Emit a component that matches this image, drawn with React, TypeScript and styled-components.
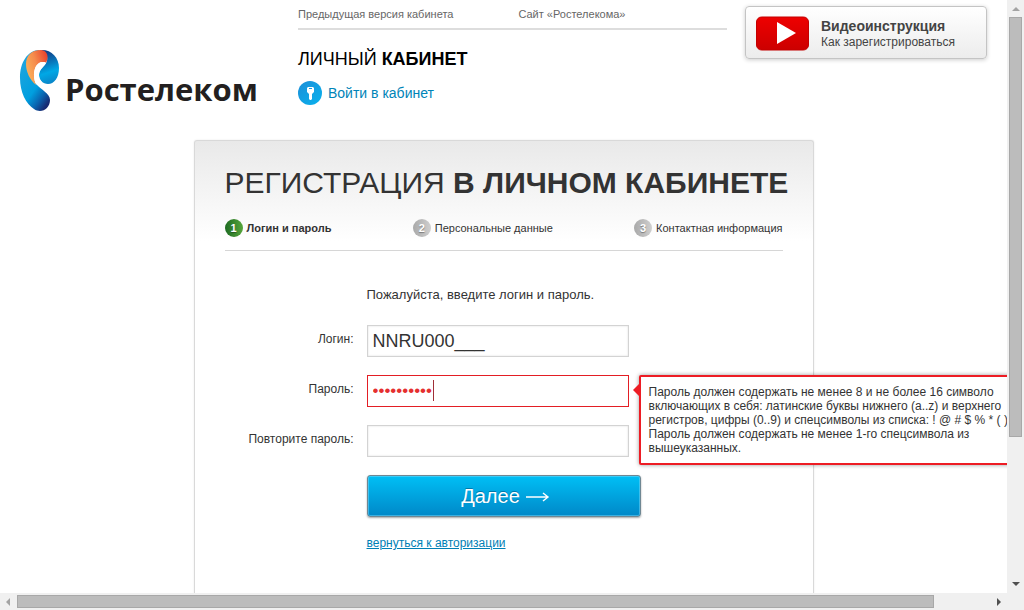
import React from "react";
import styled, { createGlobalStyle } from "styled-components";

const GlobalStyle = createGlobalStyle`
  * { box-sizing: border-box; }
  body {
    margin: 0;
    background: #fff;
    color: #333;
    font: 12px/14px "Liberation Sans", Arial, sans-serif;
  }
  h1, h2, p, ol { margin: 0; padding: 0; }
`;

const Window = styled.div`
  display: grid;
  grid-template-columns: minmax(0, 1fr) 17px;
  grid-template-rows: minmax(0, 1fr) 17px;
  height: 100vh;
  overflow: hidden;
`;

const Page = styled.div`
  overflow: hidden;
  display: flex;
  flex-direction: column;
`;

const Header = styled.header`
  display: flex;
  align-items: flex-start;
  flex: none;
  padding: 6px 20px 0 18px;
  height: 140px;
`;

const Logo = styled.a`
  display: flex;
  flex: none;
  width: 280px;
  margin-top: 43px;
  gap: 4px;
  color: #231f20;
  text-decoration: none;
  font: bold 31px/40px "Open Sans", "Noto Sans", sans-serif;
`;

const LogoText = styled.span`
  margin-top: 20px;
`;

const Cabinet = styled.div`
  flex: 0 1 429px;
  margin-right: 18px;
`;

const TopNav = styled.nav`
  display: flex;
  gap: 65px;
  padding: 1px 0 7px;
  border-bottom: 2px solid #ddd;
`;

const TopLink = styled.a`
  color: #666;
  font-size: 11px;
  text-decoration: none;
`;

const CabinetTitle = styled.h2`
  margin-top: 18px;
  color: #000;
  font-size: 18px;
  line-height: 22px;
  font-weight: normal;
  text-transform: uppercase;
`;

const LoginLink = styled.a`
  display: inline-flex;
  align-items: center;
  gap: 6px;
  margin-top: 11px;
  color: #0084b8;
  font-size: 14px;
  line-height: 24px;
  text-decoration: none;
`;

const VideoButton = styled.button`
  display: flex;
  flex: none;
  align-items: center;
  gap: 11px;
  width: 242px;
  height: 53px;
  padding: 2px 10px 0;
  border: 1px solid #c4c4c4;
  border-radius: 4px;
  background: linear-gradient(#fff, #ececec);
  box-shadow: 0 1px 4px rgba(0, 0, 0, 0.2);
  color: #444;
  font: 12px/16px "Liberation Sans", Arial, sans-serif;
  text-align: left;
`;

const VideoTitle = styled.strong`
  display: block;
  font-size: 14px;
`;

const Card = styled.main`
  flex: 1 0 auto;
  width: 620px;
  max-width: 100%;
  margin: 0 auto;
  padding: 23px 30px 0;
  border: 1px solid #d9d9d9;
  border-bottom: 0;
  border-radius: 3px 3px 0 0;
  background: linear-gradient(#e9e9e9, #fff 100px);
  box-shadow: 0 0 2px rgba(0, 0, 0, 0.1);
`;

const Title = styled.h1`
  font-size: 30px;
  line-height: 38px;
  font-weight: normal;
  text-transform: uppercase;
  white-space: nowrap;
`;

const Steps = styled.ol`
  display: flex;
  justify-content: space-between;
  margin-top: 17px;
  padding-bottom: 13px;
  border-bottom: 1px solid #d6d6d6;
  list-style: none;
`;

const Step = styled.li<{ $active?: boolean }>`
  display: flex;
  align-items: center;
  gap: 4px;
  font-size: 11px;
  line-height: 18px;
  font-weight: ${(p) => (p.$active ? "bold" : "normal")};
`;

const StepNumber = styled.span<{ $active?: boolean }>`
  width: 18px;
  height: 18px;
  border-radius: 50%;
  background: ${(p) =>
    p.$active
      ? "linear-gradient(90deg, #1d6b22, #57a63c)"
      : "linear-gradient(90deg, #a9a9a9, #cfcfcf)"};
  color: #fff;
  font-weight: bold;
  text-align: center;
  text-shadow: 0 1px 1px rgba(0, 0, 0, 0.35);
`;

const Form = styled.form`
  display: flex;
  flex-direction: column;
  align-items: flex-start;
  gap: 18px;
  padding-left: 142px;
`;

const Intro = styled.p`
  margin: 37px 0 5px;
  font-size: 13px;
`;

const Row = styled.div`
  display: flex;
  align-items: flex-start;
  gap: 13px;
  margin-left: -142px;
`;

const Label = styled.label`
  width: 129px;
  padding-top: 7px;
  text-align: right;
`;

const Field = styled.div`
  position: relative;
`;

const Input = styled.input<{ $invalid?: boolean }>`
  display: block;
  width: 262px;
  height: 32px;
  padding: 0 5px;
  border: ${(p) => (p.$invalid ? "1px solid #e31e24" : "1px solid #d3d3d3")};
  border-radius: 0;
  background: #fff;
  box-shadow: ${(p) => (p.$invalid ? "none" : "inset 0 0 2px rgba(0, 0, 0, 0.15)")};
  color: ${(p) => (p.$invalid ? "#e52f2f" : "#333")};
  font: 18px "Liberation Sans", Arial, sans-serif;
  outline: none;

  &[type="password"] {
    font-size: 17px;
  }
`;

const Caret = styled.i`
  position: absolute;
  left: 66px;
  top: 5px;
  width: 1px;
  height: 21px;
  background: #a03038;
`;

const Tooltip = styled.div`
  position: absolute;
  left: 272px;
  top: 0;
  width: 400px;
  padding: 8px;
  border: 2px solid #ed1c24;
  border-radius: 2px;
  background: #fff;
  box-shadow: 0 0 4px rgba(0, 0, 0, 0.4);
  white-space: nowrap;

  &::before {
    content: "";
    position: absolute;
    left: -8px;
    top: 7px;
    border: 6px solid transparent;
    border-left: 0;
    border-right-color: #ed1c24;
  }
`;

const Submit = styled.button`
  display: flex;
  align-items: center;
  justify-content: center;
  gap: 6px;
  width: 274px;
  height: 42px;
  padding: 0 0 0 4px;
  border: 1px solid #6f8793;
  border-radius: 3px;
  background: linear-gradient(#00bff5, #0088c8);
  box-shadow: inset 0 0 0 1px rgba(120, 215, 250, 0.5), 0 1px 2px rgba(0, 0, 0, 0.35);
  color: #fff;
  font: 20px "Liberation Sans", Arial, sans-serif;
  text-shadow: 0 -1px 0 rgba(0, 70, 110, 0.5);
`;

const BackLink = styled.a`
  color: #0080b5;
  line-height: 16px;
  text-decoration: underline;
`;

const VerticalBar = styled.div`
  display: flex;
  flex-direction: column;
  align-items: center;
  justify-content: space-between;
  background: #f0f0f0;
  padding: 5px 0 5px;
`;

const VerticalThumb = styled.div`
  flex: 0 0 72%;
  width: 13px;
  margin: 4px 0 auto;
  border: 1px solid #a8a8a8;
  background: #bcbcbc;
`;

const HorizontalBar = styled.div`
  display: flex;
  align-items: center;
  background: #f0f0f0;
  padding: 0 5px 0 5px;
`;

const HorizontalThumb = styled.div`
  flex: 0 0 92%;
  height: 13px;
  margin: 0 auto 0 4px;
  border: 1px solid #a8a8a8;
  background: #bcbcbc;
`;

const Corner = styled.div`
  background: #f0f0f0;
`;

function LogoMark() {
  return (
    <svg width="43" height="64" viewBox="0 0 43 64" aria-hidden="true">
      <defs>
        <linearGradient id="body" x1="0.2" y1="0.2" x2="0.75" y2="1">
          <stop offset="0" stopColor="#1ba4de" />
          <stop offset="0.55" stopColor="#009fdf" />
          <stop offset="0.8" stopColor="#0a62ae" />
          <stop offset="1" stopColor="#162a72" />
        </linearGradient>
        <linearGradient id="head" x1="0.4" y1="0" x2="0.6" y2="1">
          <stop offset="0" stopColor="#123a82" />
          <stop offset="0.4" stopColor="#0879bd" />
          <stop offset="0.65" stopColor="#00a8e6" />
          <stop offset="1" stopColor="#0b83c6" />
        </linearGradient>
        <linearGradient id="flame" x1="0" y1="0.7" x2="1" y2="0.2">
          <stop offset="0" stopColor="#fbb45c" />
          <stop offset="0.5" stopColor="#f58b4c" />
          <stop offset="1" stopColor="#e8432e" />
        </linearGradient>
      </defs>
      <path d="M22 1C9 1 2 14 2 29C2 43 8 55 16 60C23 65 32 60 32 51C32 44 23 41 18 35C13 28 10 8 22 1Z" fill="url(#body)" />
      <path d="M22 1C33 0 41 8 41 19C41 29 36 35 30 35C25 35 21 31 21 26C21 20 27 18 29 12C30 7 28 3 22 1Z" fill="url(#head)" />
      <path d="M23 1C13 1 8 7 8 15C8 23 12 31 18 36C14 26 16 16 23 13L28 14C31 8 30 2 23 1Z" fill="url(#flame)" />
      <path d="M18 35C14 26 16 13 25 13C27 13 28 13 28 14C26 17 21 20 21 26C21 29 22 31 24 33C22 35 20 36 18 35Z" fill="#fff" />
    </svg>
  );
}

function KeyIcon() {
  return (
    <svg width="24" height="24" viewBox="0 0 24 24" aria-hidden="true">
      <defs>
        <linearGradient id="disc" x1="0" y1="0" x2="1" y2="1">
          <stop offset="0" stopColor="#1d8fd8" />
          <stop offset="1" stopColor="#08b2ee" />
        </linearGradient>
      </defs>
      <circle cx="12" cy="12" r="12" fill="url(#disc)" />
      <path fillRule="evenodd" fill="#fff" d="M9 7L10 6H15L16 7V11L14 13V18L13 19H12L11 18V13L9 11ZM11 7V8H14V7Z" />
    </svg>
  );
}

function PlayIcon() {
  return (
    <svg width="54" height="36" viewBox="0 0 54 36" aria-hidden="true">
      <defs>
        <linearGradient id="play" x1="0" y1="0" x2="0" y2="1">
          <stop offset="0" stopColor="#ee0000" />
          <stop offset="1" stopColor="#cc0000" />
        </linearGradient>
      </defs>
      <rect x="0.5" y="1" width="52" height="33" rx="5" fill="url(#play)" stroke="#c40000" strokeWidth="1" />
      <path d="M21 6L40 17L21 28Z" fill="#fff" />
    </svg>
  );
}

function Arrow({ d, color }: { d: string; color: string }) {
  return (
    <svg width="8" height="8" viewBox="0 0 8 8" style={{ flex: "none" }} aria-hidden="true">
      <path d={d} fill={color} />
    </svg>
  );
}

const steps = ["Логин и пароль", "Персональные данные", "Контактная информация"];

export default function App() {
  return (
    <Window>
      <GlobalStyle />
      <Page>
        <Header>
          <Logo href="#">
            <LogoMark />
            <LogoText>Ростелеком</LogoText>
          </Logo>
          <Cabinet>
            <TopNav>
              <TopLink href="#">Предыдущая версия кабинета</TopLink>
              <TopLink href="#">Сайт «Ростелекома»</TopLink>
            </TopNav>
            <CabinetTitle>
              Личный <b>кабинет</b>
            </CabinetTitle>
            <LoginLink href="#">
              <KeyIcon />
              Войти в кабинет
            </LoginLink>
          </Cabinet>
          <VideoButton type="button">
            <PlayIcon />
            <span>
              <VideoTitle>Видеоинструкция</VideoTitle>
              Как зарегистрироваться
            </span>
          </VideoButton>
        </Header>
        <Card>
          <Title>
            Регистрация <b>в личном кабинете</b>
          </Title>
          <Steps>
            {steps.map((name, i) => (
              <Step key={name} $active={i === 0}>
                <StepNumber $active={i === 0}>{i + 1}</StepNumber>
                {name}
              </Step>
            ))}
          </Steps>
          <Form>
            <Intro>Пожалуйста, введите логин и пароль.</Intro>
            <Row>
              <Label htmlFor="login">Логин:</Label>
              <Field>
                <Input id="login" type="text" defaultValue="NNRU000___" />
              </Field>
            </Row>
            <Row>
              <Label htmlFor="password">Пароль:</Label>
              <Field>
                <Input id="password" type="password" defaultValue="password1!" $invalid aria-describedby="hint" />
                <Caret />
                <Tooltip id="hint" role="tooltip">
                  Пароль должен содержать не менее 8 и не более 16 символо
                  <br />
                  включающих в себя: латинские буквы нижнего (a..z) и верхнего
                  <br />
                  регистров, цифры (0..9) и спецсимволы из списка: ! @ # $ % * ( )
                  <br />
                  Пароль должен содержать не менее 1-го спецсимвола из
                  <br />
                  вышеуказанных.
                </Tooltip>
              </Field>
            </Row>
            <Row>
              <Label htmlFor="repeat">Повторите пароль:</Label>
              <Field>
                <Input id="repeat" type="password" />
              </Field>
            </Row>
            <Submit type="button">
              Далее
              <svg width="24" height="12" viewBox="0 0 24 12" aria-hidden="true">
                <path d="M0 7H22M17 3L22 7L17 11" fill="none" stroke="#fff" strokeWidth="1.4" />
              </svg>
            </Submit>
            <BackLink href="#">вернуться к авторизации</BackLink>
          </Form>
        </Card>
      </Page>
      <VerticalBar>
        <Arrow d="M4 2L8 6H0Z" color="#a3a3a3" />
        <VerticalThumb />
        <Arrow d="M4 6L8 2H0Z" color="#505050" />
      </VerticalBar>
      <HorizontalBar>
        <Arrow d="M1 4L5 0V8Z" color="#a3a3a3" />
        <HorizontalThumb />
        <Arrow d="M7 4L3 0V8Z" color="#505050" />
      </HorizontalBar>
      <Corner />
    </Window>
  );
}
